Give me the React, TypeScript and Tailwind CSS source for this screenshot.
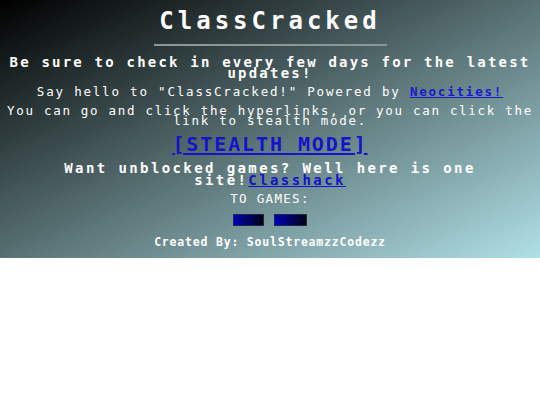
import React from 'react';

const mono = "font-['DejaVu_Sans_Mono','Liberation_Mono',monospace]";

const GameButton: React.FC<{ label: string; width: string }> = ({ label, width }) => (
  <button
    className={`${width} h-[12px] border border-[#1b2a3a] bg-[linear-gradient(to_right,#0000d0,#000010)] text-[8px] leading-[10px] text-[#0a0a40] font-['Liberation_Sans',sans-serif] overflow-hidden`}
  >
    {label}
  </button>
);

export default function App() {
  return (
    <div className="w-full bg-white min-h-[405px]">
      <div
        className={`w-full bg-[linear-gradient(to_bottom_right,#000000,#b0e0e6)] text-white text-center ${mono} pt-[8px] pb-[10px]`}
      >
        <h1 className="text-[24px] leading-[27px] font-bold tracking-[4px]">ClassCracked</h1>
        <div className="mx-auto mt-[9px] w-[233px] h-[2px] bg-[#8c9898]" />

        <p className="mt-[11px] text-[14px] leading-[11px] font-bold tracking-[2.2px]">
          Be sure to check in every few days for the latest updates!
        </p>

        <p className="mt-[7px] text-[12.5px] leading-[12px] tracking-[1.8px]">
          Say hello to "ClassCracked!" Powered by{' '}
          <a className="text-[#1a1ad0] underline font-bold">Neocities!</a>
        </p>

        <p className="mt-[8px] text-[12.5px] leading-[10px] tracking-[1.7px]">
          You can go and click the hyperlinks, or you can click the link to stealth mode.
        </p>

        <p className="mt-[8px] text-[20px] leading-[20px] font-bold tracking-[1.9px]">
          <a className="text-[#1414c8] underline underline-offset-[2px]">[STEALTH MODE]</a>
        </p>

        <p className="mt-[8px] text-[14px] leading-[12px] font-bold tracking-[2.4px]">
          Want unblocked games? Well here is one site!
          <a className="text-[#1414c8] underline">Classhack</a>
        </p>

        <p className="mt-[7px] text-[12.5px] leading-[12px] tracking-[1.3px]">TO GAMES:</p>

        <div className="mt-[9px] flex justify-center gap-[10px]">
          <GameButton label="Games" width="w-[31px]" />
          <GameButton label="Proxies" width="w-[33px]" />
        </div>

        <p className="mt-[11px] text-[11.5px] leading-[11px] font-bold tracking-[0.8px]">
          Created By: SoulStreamzzCodezz
        </p>
      </div>
    </div>
  );
}
